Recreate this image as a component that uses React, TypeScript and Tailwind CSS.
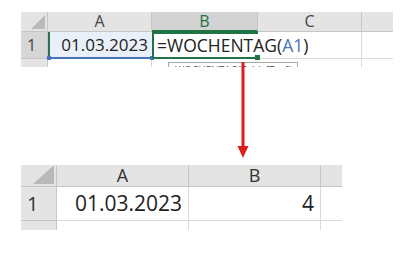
import React from 'react';

const font = { fontFamily: '"Open Sans", "Noto Sans", Arial, sans-serif' };

function Corner({ size }: { size: string }) {
  return (
    <div className="flex items-end justify-end bg-[#e4e4e4] border-r border-b border-[#c6c6c6] pr-[2px] pb-[2px]">
      <div className={`${size} bg-[#b9b9b9] [clip-path:polygon(100%_0,100%_100%,0_100%)]`} />
    </div>
  );
}

function TopSheet() {
  return (
    <div className="relative ml-[21px] mt-[12px] h-[55px] w-[372px] overflow-hidden">
      <div className="grid grid-cols-[27px_104px_106px_104px_31px] grid-rows-[20px_27px_8px] text-[#222]">
        {/* header row */}
        <Corner size="w-[14px] h-[14px]" />
        <div className="bg-[#e4e4e4] border-r border-b border-[#c6c6c6] text-center text-[16px] leading-[19px] text-[#444]">A</div>
        <div className="bg-[#d3d3d3] border-r border-[#c6c6c6] border-b-2 border-b-[#217346] text-center text-[16px] leading-[18px] text-[#217346]">B</div>
        <div className="bg-[#e4e4e4] border-r border-b border-[#c6c6c6] text-center text-[16px] leading-[19px] text-[#444]">C</div>
        <div className="bg-[#e4e4e4] border-b border-[#c6c6c6]" />

        {/* row 1 */}
        <div className="pl-[6px] bg-[#d6d6d6] border-r border-b border-[#c6c6c6] text-[16px] leading-[26px] text-[#444]">1</div>
        <div className="relative pr-[4px] bg-[#e9f0fa] border-l-2 border-l-[#2f6f55] border-b-2 border-b-[#4a72b8] text-right text-[17px] leading-[25px]">
          01.03.2023
          <span className="absolute -left-[3px] -bottom-[3px] w-[4px] h-[4px] bg-[#4a72b8]" />
          <span className="absolute -right-[2px] -bottom-[3px] w-[4px] h-[4px] bg-[#4a72b8]" />
        </div>
        <div className="relative z-10 whitespace-nowrap border-t-2 border-l-2 border-b-2 border-[#217346] pl-[3px] text-[17.5px] leading-[23px]">
          =WOCHENTAG(<span className="text-[#4a72b8]">A1</span>)
          <span className="absolute -right-[2px] -bottom-[3px] w-[5px] h-[5px] bg-[#217346]" />
        </div>
        <div className="border-r border-b border-[#dadada]" />
        <div className="border-b border-[#dadada]" />

        {/* next row, cut off */}
        <div className="bg-[#e4e4e4] border-r border-[#c6c6c6]" />
        <div className="border-r border-[#dadada]" />
        <div className="border-r border-[#dadada]" />
        <div className="border-r border-[#dadada]" />
        <div />
      </div>

      {/* function hint under the edited cell */}
      <div className="absolute left-[147px] top-[50px] w-[130px] h-[16px] border border-[#a8a8a8] bg-white px-[6px] text-[10px] leading-[14px] text-[#555] whitespace-nowrap">
        WOCHENTAG(Zahl; [Typ])
      </div>
    </div>
  );
}

function DownArrow() {
  return (
    <svg className="relative z-20 ml-[237px] -mt-[5px] block" width="12" height="96" viewBox="0 0 12 96">
      <rect x="4.5" y="0" width="3" height="86" fill="#dc1f1a" />
      <polygon points="0.5,84 11.5,84 6,96" fill="#dc1f1a" />
    </svg>
  );
}

function BottomSheet() {
  return (
    <div className="ml-[21px] mt-[7px] h-[65px] w-[321px] overflow-hidden">
      <div className="grid grid-cols-[36px_132px_132px_21px] grid-rows-[22px_34px_9px] text-[#1e1e1e]">
        <Corner size="w-[21px] h-[19px]" />
        <div className="bg-[#e4e4e4] border-r border-b border-[#c6c6c6] text-center text-[18px] leading-[21px] text-[#333]">A</div>
        <div className="bg-[#e4e4e4] border-r border-b border-[#c6c6c6] text-center text-[18px] leading-[21px] text-[#333]">B</div>
        <div className="bg-[#e4e4e4] border-b border-[#c6c6c6]" />

        <div className="pl-[6px] bg-[#e4e4e4] border-r border-b border-[#c6c6c6] text-[20px] leading-[33px] text-[#333]">1</div>
        <div className="pr-[6px] border-r border-b border-[#dadada] text-right text-[21px] leading-[33px]">01.03.2023</div>
        <div className="pr-[6px] border-r border-b border-[#dadada] text-right text-[21px] leading-[33px]">4</div>
        <div className="border-b border-[#dadada]" />

        <div className="bg-[#e4e4e4] border-r border-[#c6c6c6]" />
        <div className="border-r border-[#dadada]" />
        <div className="border-r border-[#dadada]" />
        <div />
      </div>
    </div>
  );
}

export default function App() {
  return (
    <div className="w-[400px] h-[268px] bg-white overflow-hidden" style={font}>
      <TopSheet />
      <DownArrow />
      <BottomSheet />
    </div>
  );
}
